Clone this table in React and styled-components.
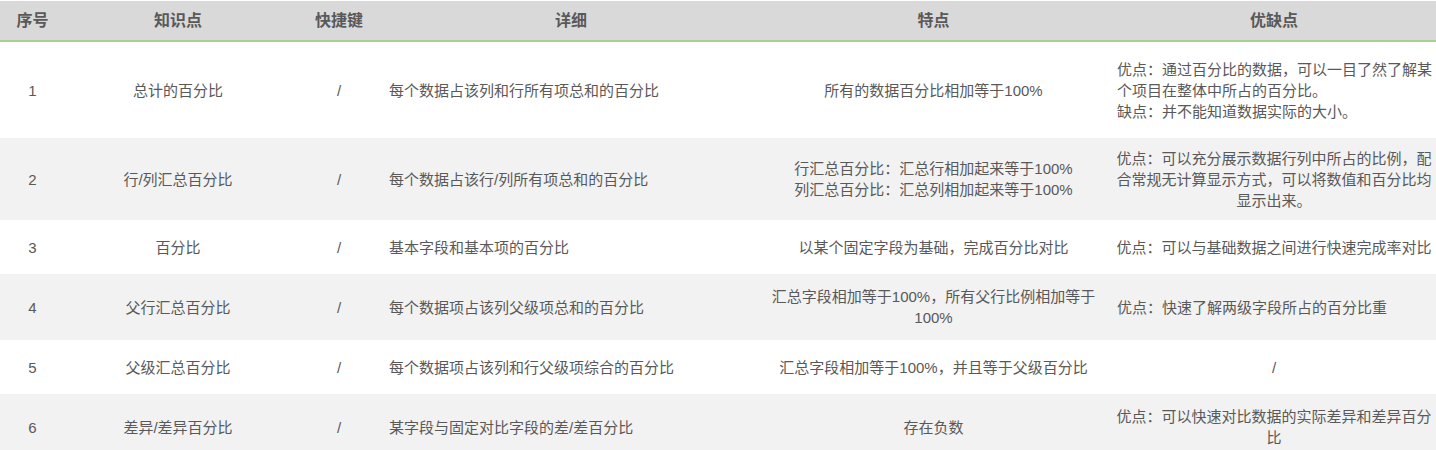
import React from "react";
import styled, { createGlobalStyle } from "styled-components";

const GlobalStyle = createGlobalStyle`
  body {
    margin: 0;
    background: #fff;
    font-family: "Liberation Sans", "Noto Sans CJK SC", sans-serif;
    overflow: hidden;
  }
`;

const Wrapper = styled.div`
  padding-top: 1px;
  width: 1436px;
`;

const Table = styled.table`
  width: 1436px;
  table-layout: fixed;
  border-collapse: collapse;
  color: #595959;
  font-size: 15px;
  line-height: 21px;
`;

const HeadRow = styled.tr`
  height: 40px;
  background-color: #d9d9d9;
  border-bottom: 2px solid #a9d18e;
`;

const HeadCell = styled.th`
  padding: 0 2px;
  font-size: 16px;
  font-weight: bold;
  text-align: center;
  color: #595959;
`;

const Row = styled.tr`
  height: ${(p) => p.$h}px;
  background-color: ${(p) => (p.$alt ? "#f2f2f2" : "#ffffff")};
`;

const Cell = styled.td`
  padding: 0 2px;
  vertical-align: middle;
  text-align: ${(p) => p.$align || "center"};
`;

const ProsCell = styled(Cell)`
  padding-left: ${(p) => (p.$align === "left" ? 5 : 2)}px;
`;

const cols = [65, 226, 96, 368, 357, 324];
const heads = ["序号", "知识点", "快捷键", "详细", "特点", "优缺点"];

const rows = [
  {
    h: 97,
    name: "总计的百分比",
    detail: "每个数据占该列和行所有项总和的百分比",
    feature: ["所有的数据百分比相加等于100%"],
    pros: ["优点：通过百分比的数据，可以一目了然了解某个项目在整体中所占的百分比。", "缺点：并不能知道数据实际的大小。"],
    prosAlign: "left",
  },
  {
    h: 82,
    name: "行/列汇总百分比",
    detail: "每个数据占该行/列所有项总和的百分比",
    feature: ["行汇总百分比：汇总行相加起来等于100%", "列汇总百分比：汇总列相加起来等于100%"],
    pros: ["优点：可以充分展示数据行列中所占的比例，配合常规无计算显示方式，可以将数值和百分比均显示出来。"],
  },
  {
    h: 54,
    name: "百分比",
    detail: "基本字段和基本项的百分比",
    feature: ["以某个固定字段为基础，完成百分比对比"],
    pros: ["优点：可以与基础数据之间进行快速完成率对比"],
  },
  {
    h: 66,
    name: "父行汇总百分比",
    detail: "每个数据项占该列父级项总和的百分比",
    feature: ["汇总字段相加等于100%，所有父行比例相加等于 100%"],
    pros: ["优点：快速了解两级字段所占的百分比重"],
    prosAlign: "left",
  },
  {
    h: 54,
    name: "父级汇总百分比",
    detail: "每个数据项占该列和行父级项综合的百分比",
    feature: ["汇总字段相加等于100%，并且等于父级百分比"],
    pros: ["/"],
  },
  {
    h: 66,
    name: "差异/差异百分比",
    detail: "某字段与固定对比字段的差/差百分比",
    feature: ["存在负数"],
    pros: ["优点：可以快速对比数据的实际差异和差异百分比"],
  },
];

const Lines = ({ items }) =>
  items.map((t, i) => <div key={i}>{t}</div>);

export default function App() {
  return (
    <>
      <GlobalStyle />
      <Wrapper>
        <Table>
          <colgroup>
            {cols.map((w, i) => (
              <col key={i} style={{ width: w }} />
            ))}
          </colgroup>
          <thead>
            <HeadRow>
              {heads.map((h) => (
                <HeadCell key={h}>{h}</HeadCell>
              ))}
            </HeadRow>
          </thead>
          <tbody>
            {rows.map((r, i) => (
              <Row key={i} $h={r.h} $alt={i % 2 === 1}>
                <Cell>{i + 1}</Cell>
                <Cell>{r.name}</Cell>
                <Cell>/</Cell>
                <Cell $align="left">{r.detail}</Cell>
                <Cell>
                  <Lines items={r.feature} />
                </Cell>
                <ProsCell $align={r.prosAlign}>
                  <Lines items={r.pros} />
                </ProsCell>
              </Row>
            ))}
          </tbody>
        </Table>
      </Wrapper>
    </>
  );
}
